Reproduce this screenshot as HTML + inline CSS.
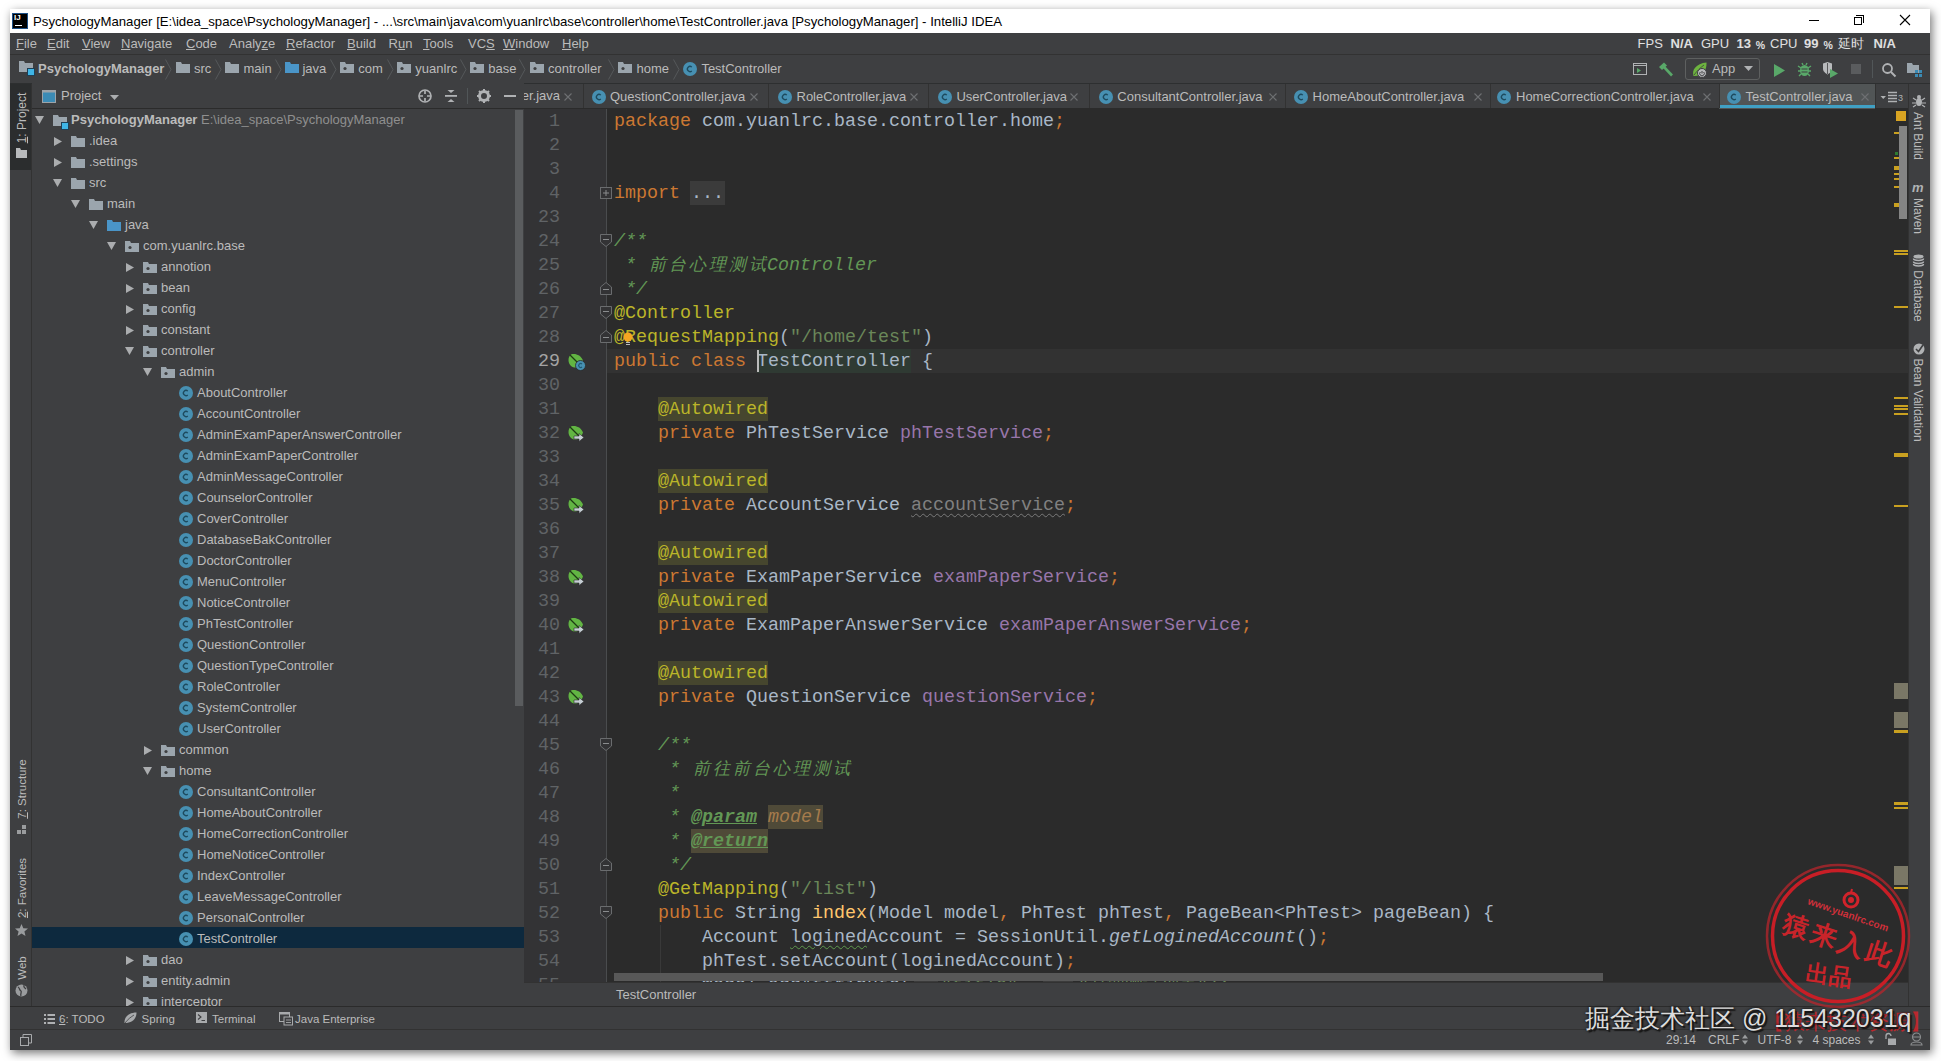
<!DOCTYPE html><html><head><meta charset="utf-8"><style>
*{box-sizing:border-box;margin:0;padding:0}
body{width:1941px;height:1061px;overflow:hidden;background:#fff;position:relative;font-family:"Liberation Sans",sans-serif;font-size:13px;color:#BBBBBB}
.a{position:absolute;white-space:pre}
svg.a{overflow:visible}
.mono{font-family:"Liberation Mono",monospace}
.t{position:absolute;white-space:pre;line-height:16px;color:#BBBBBB}
</style></head><body>
<div class="a" style="left:10px;top:9px;width:1920px;height:1041px;background:#3E3F41;box-shadow:2px 3px 9px rgba(0,0,0,0.55)"></div>
<div class="a" style="left:10px;top:9px;width:1920px;height:24px;background:#fff"></div>
<div class="a" style="left:12px;top:13px;width:16px;height:16px;background:#000;border:1px solid #1d4f86"></div>
<div class="a" style="left:14px;top:13px;font:bold 8px 'Liberation Sans';color:#fff">IJ</div>
<div class="a" style="left:15px;top:25px;width:7px;height:1px;background:#fff"></div>
<div class="a" style="left:33px;top:14px;font-size:13.2px;color:#000;line-height:16px">PsychologyManager [E:\idea_space\PsychologyManager] - ...\src\main\java\com\yuanlrc\base\controller\home\TestController.java [PsychologyManager] - IntelliJ IDEA</div>
<div class="a" style="left:1809px;top:20px;width:10px;height:1px;background:#000"></div>
<div class="a" style="left:1854px;top:17px;width:8px;height:8px;border:1px solid #000;background:#fff"></div>
<div class="a" style="left:1856px;top:15px;width:8px;height:8px;border-top:1px solid #000;border-right:1px solid #000"></div>
<svg class="a" style="left:1899px;top:14px" width="12" height="12" viewBox="0 0 12 12"><path d="M1 1L11 11M11 1L1 11" stroke="#000" stroke-width="1.1"/></svg>
<div class="a" style="left:10px;top:33px;width:1920px;height:22px;background:#3E3F41;border-bottom:1px solid #323232"></div>
<div class="t" style="left:16px;top:36px"><u>F</u>ile</div>
<div class="t" style="left:47px;top:36px"><u>E</u>dit</div>
<div class="t" style="left:82px;top:36px"><u>V</u>iew</div>
<div class="t" style="left:121px;top:36px"><u>N</u>avigate</div>
<div class="t" style="left:186px;top:36px"><u>C</u>ode</div>
<div class="t" style="left:229px;top:36px">Analy<u>z</u>e</div>
<div class="t" style="left:286px;top:36px"><u>R</u>efactor</div>
<div class="t" style="left:347px;top:36px"><u>B</u>uild</div>
<div class="t" style="left:388.5px;top:36px">R<u>u</u>n</div>
<div class="t" style="left:423px;top:36px"><u>T</u>ools</div>
<div class="t" style="left:468px;top:36px">VC<u>S</u></div>
<div class="t" style="left:503px;top:36px"><u>W</u>indow</div>
<div class="t" style="left:562px;top:36px"><u>H</u>elp</div>
<div class="t" style="left:1637.6px;top:36px;color:#E0E0E0;">FPS</div>
<div class="t" style="left:1670.6px;top:36px;color:#E0E0E0;font-weight:bold;">N/A</div>
<div class="t" style="left:1701px;top:36px;color:#E0E0E0;">GPU</div>
<div class="t" style="left:1736.6px;top:36px;color:#E0E0E0;font-weight:bold;">13</div>
<div class="t" style="left:1755.7px;top:36px;color:#E0E0E0;font-weight:bold;font-size:10.5px;top:37px;">%</div>
<div class="t" style="left:1770px;top:36px;color:#E0E0E0;">CPU</div>
<div class="t" style="left:1804px;top:36px;color:#E0E0E0;font-weight:bold;">99</div>
<div class="t" style="left:1823.6px;top:36px;color:#E0E0E0;font-weight:bold;font-size:10.5px;top:37px;">%</div>
<div class="t" style="left:1837.6px;top:36px;color:#E0E0E0;">延时</div>
<div class="t" style="left:1873.5px;top:36px;color:#E0E0E0;font-weight:bold;">N/A</div>
<div class="a" style="left:10px;top:55px;width:1920px;height:29px;background:#3E3F41;border-bottom:1px solid #2D2F30"></div>
<svg class="a" style="left:19px;top:61px" width="16" height="15" viewBox="0 0 16 15"><path d="M0 0H5L6 2H14V11H0Z" fill="#9BA5AD"/><rect x="8.5" y="7.5" width="7" height="7" fill="#3FB5E6" stroke="#1f3f55" stroke-width="1"/></svg>
<div class="t" style="left:38px;top:61px;font-weight:bold">PsychologyManager</div>
<svg class="a" style="left:165px;top:59px" width="7" height="21" viewBox="0 0 7 21"><path d="M0.5 0.5L6 10.5L0.5 20.5" stroke="#55585A" fill="none" stroke-width="1"/></svg>
<svg class="a" style="left:175.8px;top:62px" width="14" height="11" viewBox="0 0 14 11"><path d="M0 0H5L6 2H14V11H0Z" fill="#9BA5AD"/></svg>
<div class="t" style="left:194px;top:61px">src</div>
<svg class="a" style="left:215px;top:59px" width="7" height="21" viewBox="0 0 7 21"><path d="M0.5 0.5L6 10.5L0.5 20.5" stroke="#55585A" fill="none" stroke-width="1"/></svg>
<svg class="a" style="left:225px;top:62px" width="14" height="11" viewBox="0 0 14 11"><path d="M0 0H5L6 2H14V11H0Z" fill="#9BA5AD"/></svg>
<div class="t" style="left:243.5px;top:61px">main</div>
<svg class="a" style="left:275px;top:59px" width="7" height="21" viewBox="0 0 7 21"><path d="M0.5 0.5L6 10.5L0.5 20.5" stroke="#55585A" fill="none" stroke-width="1"/></svg>
<svg class="a" style="left:284.7px;top:62px" width="14" height="11" viewBox="0 0 14 11"><path d="M0 0H5L6 2H14V11H0Z" fill="#4A95C8"/></svg>
<div class="t" style="left:302.4px;top:61px">java</div>
<svg class="a" style="left:329.5px;top:59px" width="7" height="21" viewBox="0 0 7 21"><path d="M0.5 0.5L6 10.5L0.5 20.5" stroke="#55585A" fill="none" stroke-width="1"/></svg>
<svg class="a" style="left:340px;top:62px" width="14" height="11" viewBox="0 0 14 11"><path d="M0 0H5L6 2H14V11H0Z" fill="#9BA5AD"/><circle cx="5" cy="6.5" r="1.6" fill="#3E3F41"/></svg>
<div class="t" style="left:358.3px;top:61px">com</div>
<svg class="a" style="left:387px;top:59px" width="7" height="21" viewBox="0 0 7 21"><path d="M0.5 0.5L6 10.5L0.5 20.5" stroke="#55585A" fill="none" stroke-width="1"/></svg>
<svg class="a" style="left:397px;top:62px" width="14" height="11" viewBox="0 0 14 11"><path d="M0 0H5L6 2H14V11H0Z" fill="#9BA5AD"/><circle cx="5" cy="6.5" r="1.6" fill="#3E3F41"/></svg>
<div class="t" style="left:415.3px;top:61px">yuanlrc</div>
<svg class="a" style="left:460px;top:59px" width="7" height="21" viewBox="0 0 7 21"><path d="M0.5 0.5L6 10.5L0.5 20.5" stroke="#55585A" fill="none" stroke-width="1"/></svg>
<svg class="a" style="left:470px;top:62px" width="14" height="11" viewBox="0 0 14 11"><path d="M0 0H5L6 2H14V11H0Z" fill="#9BA5AD"/><circle cx="5" cy="6.5" r="1.6" fill="#3E3F41"/></svg>
<div class="t" style="left:488.3px;top:61px">base</div>
<svg class="a" style="left:519.4px;top:59px" width="7" height="21" viewBox="0 0 7 21"><path d="M0.5 0.5L6 10.5L0.5 20.5" stroke="#55585A" fill="none" stroke-width="1"/></svg>
<svg class="a" style="left:530px;top:62px" width="14" height="11" viewBox="0 0 14 11"><path d="M0 0H5L6 2H14V11H0Z" fill="#9BA5AD"/><circle cx="5" cy="6.5" r="1.6" fill="#3E3F41"/></svg>
<div class="t" style="left:548px;top:61px">controller</div>
<svg class="a" style="left:608px;top:59px" width="7" height="21" viewBox="0 0 7 21"><path d="M0.5 0.5L6 10.5L0.5 20.5" stroke="#55585A" fill="none" stroke-width="1"/></svg>
<svg class="a" style="left:618px;top:62px" width="14" height="11" viewBox="0 0 14 11"><path d="M0 0H5L6 2H14V11H0Z" fill="#9BA5AD"/><circle cx="5" cy="6.5" r="1.6" fill="#3E3F41"/></svg>
<div class="t" style="left:636.5px;top:61px">home</div>
<svg class="a" style="left:673px;top:59px" width="7" height="21" viewBox="0 0 7 21"><path d="M0.5 0.5L6 10.5L0.5 20.5" stroke="#55585A" fill="none" stroke-width="1"/></svg>
<svg class="a" style="left:683px;top:62px" width="14" height="14" viewBox="0 0 14 14"><circle cx="7" cy="7" r="7" fill="#4790B2"/><path d="M8.8 5.1A2.6 2.6 0 1 0 8.8 8.9" stroke="#1D4A5E" stroke-width="1.3" fill="none"/></svg>
<div class="t" style="left:701.4px;top:61px">TestController</div>
<div class="a" style="left:10px;top:84px;width:22px;height:922px;background:#3E3F41;border-right:1px solid #323232"></div>
<div class="a" style="left:10px;top:84px;width:21px;height:86px;background:#2B2D2E"></div>
<div class="a" style="left:32px;top:83px;width:492px;height:26px;background:#3E3F41;border-bottom:1px solid #2D2F30"></div>
<div class="a" style="left:32px;top:109px;width:492px;height:897px;background:#3E3F41"></div>
<div class="a" style="left:32px;top:109px;width:492px;height:897px;overflow:hidden">
<svg class="a" style="left:3px;top:7px" width="9" height="8" viewBox="0 0 9 8"><path d="M0 0H9L4.5 8Z" fill="#ABADAF"/></svg>
<svg class="a" style="left:21px;top:6px" width="16" height="15" viewBox="0 0 16 15"><path d="M0 0H5L6 2H14V11H0Z" fill="#9BA5AD"/><rect x="8.5" y="7.5" width="7" height="7" fill="#3FB5E6" stroke="#1f3f55" stroke-width="1"/></svg>
<div class="t" style="left:39px;top:3px;font-weight:bold">PsychologyManager</div>
<div class="t" style="left:169px;top:3px;color:#8F8F8F">E:\idea_space\PsychologyManager</div>
<svg class="a" style="left:22px;top:27.5px" width="8" height="9" viewBox="0 0 8 9"><path d="M0 0V9L8 4.5Z" fill="#ABADAF"/></svg>
<svg class="a" style="left:39px;top:26.5px" width="14" height="11" viewBox="0 0 14 11"><path d="M0 0H5L6 2H14V11H0Z" fill="#9BA5AD"/></svg>
<div class="t" style="left:57px;top:24px">.idea</div>
<svg class="a" style="left:22px;top:48.5px" width="8" height="9" viewBox="0 0 8 9"><path d="M0 0V9L8 4.5Z" fill="#ABADAF"/></svg>
<svg class="a" style="left:39px;top:47.5px" width="14" height="11" viewBox="0 0 14 11"><path d="M0 0H5L6 2H14V11H0Z" fill="#9BA5AD"/></svg>
<div class="t" style="left:57px;top:45px">.settings</div>
<svg class="a" style="left:21px;top:70px" width="9" height="8" viewBox="0 0 9 8"><path d="M0 0H9L4.5 8Z" fill="#ABADAF"/></svg>
<svg class="a" style="left:39px;top:68.5px" width="14" height="11" viewBox="0 0 14 11"><path d="M0 0H5L6 2H14V11H0Z" fill="#9BA5AD"/></svg>
<div class="t" style="left:57px;top:66px">src</div>
<svg class="a" style="left:39px;top:91px" width="9" height="8" viewBox="0 0 9 8"><path d="M0 0H9L4.5 8Z" fill="#ABADAF"/></svg>
<svg class="a" style="left:57px;top:89.5px" width="14" height="11" viewBox="0 0 14 11"><path d="M0 0H5L6 2H14V11H0Z" fill="#9BA5AD"/></svg>
<div class="t" style="left:75px;top:87px">main</div>
<svg class="a" style="left:57px;top:112px" width="9" height="8" viewBox="0 0 9 8"><path d="M0 0H9L4.5 8Z" fill="#ABADAF"/></svg>
<svg class="a" style="left:75px;top:110.5px" width="14" height="11" viewBox="0 0 14 11"><path d="M0 0H5L6 2H14V11H0Z" fill="#4A95C8"/></svg>
<div class="t" style="left:93px;top:108px">java</div>
<svg class="a" style="left:75px;top:133px" width="9" height="8" viewBox="0 0 9 8"><path d="M0 0H9L4.5 8Z" fill="#ABADAF"/></svg>
<svg class="a" style="left:93px;top:131.5px" width="14" height="11" viewBox="0 0 14 11"><path d="M0 0H5L6 2H14V11H0Z" fill="#9BA5AD"/><circle cx="5" cy="6.5" r="1.6" fill="#3E3F41"/></svg>
<div class="t" style="left:111px;top:129px">com.yuanlrc.base</div>
<svg class="a" style="left:94px;top:153.5px" width="8" height="9" viewBox="0 0 8 9"><path d="M0 0V9L8 4.5Z" fill="#ABADAF"/></svg>
<svg class="a" style="left:111px;top:152.5px" width="14" height="11" viewBox="0 0 14 11"><path d="M0 0H5L6 2H14V11H0Z" fill="#9BA5AD"/><circle cx="5" cy="6.5" r="1.6" fill="#3E3F41"/></svg>
<div class="t" style="left:129px;top:150px">annotion</div>
<svg class="a" style="left:94px;top:174.5px" width="8" height="9" viewBox="0 0 8 9"><path d="M0 0V9L8 4.5Z" fill="#ABADAF"/></svg>
<svg class="a" style="left:111px;top:173.5px" width="14" height="11" viewBox="0 0 14 11"><path d="M0 0H5L6 2H14V11H0Z" fill="#9BA5AD"/><circle cx="5" cy="6.5" r="1.6" fill="#3E3F41"/></svg>
<div class="t" style="left:129px;top:171px">bean</div>
<svg class="a" style="left:94px;top:195.5px" width="8" height="9" viewBox="0 0 8 9"><path d="M0 0V9L8 4.5Z" fill="#ABADAF"/></svg>
<svg class="a" style="left:111px;top:194.5px" width="14" height="11" viewBox="0 0 14 11"><path d="M0 0H5L6 2H14V11H0Z" fill="#9BA5AD"/><circle cx="5" cy="6.5" r="1.6" fill="#3E3F41"/></svg>
<div class="t" style="left:129px;top:192px">config</div>
<svg class="a" style="left:94px;top:216.5px" width="8" height="9" viewBox="0 0 8 9"><path d="M0 0V9L8 4.5Z" fill="#ABADAF"/></svg>
<svg class="a" style="left:111px;top:215.5px" width="14" height="11" viewBox="0 0 14 11"><path d="M0 0H5L6 2H14V11H0Z" fill="#9BA5AD"/><circle cx="5" cy="6.5" r="1.6" fill="#3E3F41"/></svg>
<div class="t" style="left:129px;top:213px">constant</div>
<svg class="a" style="left:93px;top:238px" width="9" height="8" viewBox="0 0 9 8"><path d="M0 0H9L4.5 8Z" fill="#ABADAF"/></svg>
<svg class="a" style="left:111px;top:236.5px" width="14" height="11" viewBox="0 0 14 11"><path d="M0 0H5L6 2H14V11H0Z" fill="#9BA5AD"/><circle cx="5" cy="6.5" r="1.6" fill="#3E3F41"/></svg>
<div class="t" style="left:129px;top:234px">controller</div>
<svg class="a" style="left:111px;top:259px" width="9" height="8" viewBox="0 0 9 8"><path d="M0 0H9L4.5 8Z" fill="#ABADAF"/></svg>
<svg class="a" style="left:129px;top:257.5px" width="14" height="11" viewBox="0 0 14 11"><path d="M0 0H5L6 2H14V11H0Z" fill="#9BA5AD"/><circle cx="5" cy="6.5" r="1.6" fill="#3E3F41"/></svg>
<div class="t" style="left:147px;top:255px">admin</div>
<svg class="a" style="left:147px;top:277px" width="14" height="14" viewBox="0 0 14 14"><circle cx="7" cy="7" r="7" fill="#4790B2"/><path d="M8.8 5.1A2.6 2.6 0 1 0 8.8 8.9" stroke="#1D4A5E" stroke-width="1.3" fill="none"/></svg>
<div class="t" style="left:165px;top:276px">AboutController</div>
<svg class="a" style="left:147px;top:298px" width="14" height="14" viewBox="0 0 14 14"><circle cx="7" cy="7" r="7" fill="#4790B2"/><path d="M8.8 5.1A2.6 2.6 0 1 0 8.8 8.9" stroke="#1D4A5E" stroke-width="1.3" fill="none"/></svg>
<div class="t" style="left:165px;top:297px">AccountController</div>
<svg class="a" style="left:147px;top:319px" width="14" height="14" viewBox="0 0 14 14"><circle cx="7" cy="7" r="7" fill="#4790B2"/><path d="M8.8 5.1A2.6 2.6 0 1 0 8.8 8.9" stroke="#1D4A5E" stroke-width="1.3" fill="none"/></svg>
<div class="t" style="left:165px;top:318px">AdminExamPaperAnswerController</div>
<svg class="a" style="left:147px;top:340px" width="14" height="14" viewBox="0 0 14 14"><circle cx="7" cy="7" r="7" fill="#4790B2"/><path d="M8.8 5.1A2.6 2.6 0 1 0 8.8 8.9" stroke="#1D4A5E" stroke-width="1.3" fill="none"/></svg>
<div class="t" style="left:165px;top:339px">AdminExamPaperController</div>
<svg class="a" style="left:147px;top:361px" width="14" height="14" viewBox="0 0 14 14"><circle cx="7" cy="7" r="7" fill="#4790B2"/><path d="M8.8 5.1A2.6 2.6 0 1 0 8.8 8.9" stroke="#1D4A5E" stroke-width="1.3" fill="none"/></svg>
<div class="t" style="left:165px;top:360px">AdminMessageController</div>
<svg class="a" style="left:147px;top:382px" width="14" height="14" viewBox="0 0 14 14"><circle cx="7" cy="7" r="7" fill="#4790B2"/><path d="M8.8 5.1A2.6 2.6 0 1 0 8.8 8.9" stroke="#1D4A5E" stroke-width="1.3" fill="none"/></svg>
<div class="t" style="left:165px;top:381px">CounselorController</div>
<svg class="a" style="left:147px;top:403px" width="14" height="14" viewBox="0 0 14 14"><circle cx="7" cy="7" r="7" fill="#4790B2"/><path d="M8.8 5.1A2.6 2.6 0 1 0 8.8 8.9" stroke="#1D4A5E" stroke-width="1.3" fill="none"/></svg>
<div class="t" style="left:165px;top:402px">CoverController</div>
<svg class="a" style="left:147px;top:424px" width="14" height="14" viewBox="0 0 14 14"><circle cx="7" cy="7" r="7" fill="#4790B2"/><path d="M8.8 5.1A2.6 2.6 0 1 0 8.8 8.9" stroke="#1D4A5E" stroke-width="1.3" fill="none"/></svg>
<div class="t" style="left:165px;top:423px">DatabaseBakController</div>
<svg class="a" style="left:147px;top:445px" width="14" height="14" viewBox="0 0 14 14"><circle cx="7" cy="7" r="7" fill="#4790B2"/><path d="M8.8 5.1A2.6 2.6 0 1 0 8.8 8.9" stroke="#1D4A5E" stroke-width="1.3" fill="none"/></svg>
<div class="t" style="left:165px;top:444px">DoctorController</div>
<svg class="a" style="left:147px;top:466px" width="14" height="14" viewBox="0 0 14 14"><circle cx="7" cy="7" r="7" fill="#4790B2"/><path d="M8.8 5.1A2.6 2.6 0 1 0 8.8 8.9" stroke="#1D4A5E" stroke-width="1.3" fill="none"/></svg>
<div class="t" style="left:165px;top:465px">MenuController</div>
<svg class="a" style="left:147px;top:487px" width="14" height="14" viewBox="0 0 14 14"><circle cx="7" cy="7" r="7" fill="#4790B2"/><path d="M8.8 5.1A2.6 2.6 0 1 0 8.8 8.9" stroke="#1D4A5E" stroke-width="1.3" fill="none"/></svg>
<div class="t" style="left:165px;top:486px">NoticeController</div>
<svg class="a" style="left:147px;top:508px" width="14" height="14" viewBox="0 0 14 14"><circle cx="7" cy="7" r="7" fill="#4790B2"/><path d="M8.8 5.1A2.6 2.6 0 1 0 8.8 8.9" stroke="#1D4A5E" stroke-width="1.3" fill="none"/></svg>
<div class="t" style="left:165px;top:507px">PhTestController</div>
<svg class="a" style="left:147px;top:529px" width="14" height="14" viewBox="0 0 14 14"><circle cx="7" cy="7" r="7" fill="#4790B2"/><path d="M8.8 5.1A2.6 2.6 0 1 0 8.8 8.9" stroke="#1D4A5E" stroke-width="1.3" fill="none"/></svg>
<div class="t" style="left:165px;top:528px">QuestionController</div>
<svg class="a" style="left:147px;top:550px" width="14" height="14" viewBox="0 0 14 14"><circle cx="7" cy="7" r="7" fill="#4790B2"/><path d="M8.8 5.1A2.6 2.6 0 1 0 8.8 8.9" stroke="#1D4A5E" stroke-width="1.3" fill="none"/></svg>
<div class="t" style="left:165px;top:549px">QuestionTypeController</div>
<svg class="a" style="left:147px;top:571px" width="14" height="14" viewBox="0 0 14 14"><circle cx="7" cy="7" r="7" fill="#4790B2"/><path d="M8.8 5.1A2.6 2.6 0 1 0 8.8 8.9" stroke="#1D4A5E" stroke-width="1.3" fill="none"/></svg>
<div class="t" style="left:165px;top:570px">RoleController</div>
<svg class="a" style="left:147px;top:592px" width="14" height="14" viewBox="0 0 14 14"><circle cx="7" cy="7" r="7" fill="#4790B2"/><path d="M8.8 5.1A2.6 2.6 0 1 0 8.8 8.9" stroke="#1D4A5E" stroke-width="1.3" fill="none"/></svg>
<div class="t" style="left:165px;top:591px">SystemController</div>
<svg class="a" style="left:147px;top:613px" width="14" height="14" viewBox="0 0 14 14"><circle cx="7" cy="7" r="7" fill="#4790B2"/><path d="M8.8 5.1A2.6 2.6 0 1 0 8.8 8.9" stroke="#1D4A5E" stroke-width="1.3" fill="none"/></svg>
<div class="t" style="left:165px;top:612px">UserController</div>
<svg class="a" style="left:112px;top:636.5px" width="8" height="9" viewBox="0 0 8 9"><path d="M0 0V9L8 4.5Z" fill="#ABADAF"/></svg>
<svg class="a" style="left:129px;top:635.5px" width="14" height="11" viewBox="0 0 14 11"><path d="M0 0H5L6 2H14V11H0Z" fill="#9BA5AD"/><circle cx="5" cy="6.5" r="1.6" fill="#3E3F41"/></svg>
<div class="t" style="left:147px;top:633px">common</div>
<svg class="a" style="left:111px;top:658px" width="9" height="8" viewBox="0 0 9 8"><path d="M0 0H9L4.5 8Z" fill="#ABADAF"/></svg>
<svg class="a" style="left:129px;top:656.5px" width="14" height="11" viewBox="0 0 14 11"><path d="M0 0H5L6 2H14V11H0Z" fill="#9BA5AD"/><circle cx="5" cy="6.5" r="1.6" fill="#3E3F41"/></svg>
<div class="t" style="left:147px;top:654px">home</div>
<svg class="a" style="left:147px;top:676px" width="14" height="14" viewBox="0 0 14 14"><circle cx="7" cy="7" r="7" fill="#4790B2"/><path d="M8.8 5.1A2.6 2.6 0 1 0 8.8 8.9" stroke="#1D4A5E" stroke-width="1.3" fill="none"/></svg>
<div class="t" style="left:165px;top:675px">ConsultantController</div>
<svg class="a" style="left:147px;top:697px" width="14" height="14" viewBox="0 0 14 14"><circle cx="7" cy="7" r="7" fill="#4790B2"/><path d="M8.8 5.1A2.6 2.6 0 1 0 8.8 8.9" stroke="#1D4A5E" stroke-width="1.3" fill="none"/></svg>
<div class="t" style="left:165px;top:696px">HomeAboutController</div>
<svg class="a" style="left:147px;top:718px" width="14" height="14" viewBox="0 0 14 14"><circle cx="7" cy="7" r="7" fill="#4790B2"/><path d="M8.8 5.1A2.6 2.6 0 1 0 8.8 8.9" stroke="#1D4A5E" stroke-width="1.3" fill="none"/></svg>
<div class="t" style="left:165px;top:717px">HomeCorrectionController</div>
<svg class="a" style="left:147px;top:739px" width="14" height="14" viewBox="0 0 14 14"><circle cx="7" cy="7" r="7" fill="#4790B2"/><path d="M8.8 5.1A2.6 2.6 0 1 0 8.8 8.9" stroke="#1D4A5E" stroke-width="1.3" fill="none"/></svg>
<div class="t" style="left:165px;top:738px">HomeNoticeController</div>
<svg class="a" style="left:147px;top:760px" width="14" height="14" viewBox="0 0 14 14"><circle cx="7" cy="7" r="7" fill="#4790B2"/><path d="M8.8 5.1A2.6 2.6 0 1 0 8.8 8.9" stroke="#1D4A5E" stroke-width="1.3" fill="none"/></svg>
<div class="t" style="left:165px;top:759px">IndexController</div>
<svg class="a" style="left:147px;top:781px" width="14" height="14" viewBox="0 0 14 14"><circle cx="7" cy="7" r="7" fill="#4790B2"/><path d="M8.8 5.1A2.6 2.6 0 1 0 8.8 8.9" stroke="#1D4A5E" stroke-width="1.3" fill="none"/></svg>
<div class="t" style="left:165px;top:780px">LeaveMessageController</div>
<svg class="a" style="left:147px;top:802px" width="14" height="14" viewBox="0 0 14 14"><circle cx="7" cy="7" r="7" fill="#4790B2"/><path d="M8.8 5.1A2.6 2.6 0 1 0 8.8 8.9" stroke="#1D4A5E" stroke-width="1.3" fill="none"/></svg>
<div class="t" style="left:165px;top:801px">PersonalController</div>
<div class="a" style="left:0px;top:817.5px;width:492px;height:21px;background:#0D293E"></div>
<svg class="a" style="left:147px;top:823px" width="14" height="14" viewBox="0 0 14 14"><circle cx="7" cy="7" r="7" fill="#4790B2"/><path d="M8.8 5.1A2.6 2.6 0 1 0 8.8 8.9" stroke="#1D4A5E" stroke-width="1.3" fill="none"/></svg>
<div class="t" style="left:165px;top:822px">TestController</div>
<svg class="a" style="left:94px;top:846.5px" width="8" height="9" viewBox="0 0 8 9"><path d="M0 0V9L8 4.5Z" fill="#ABADAF"/></svg>
<svg class="a" style="left:111px;top:845.5px" width="14" height="11" viewBox="0 0 14 11"><path d="M0 0H5L6 2H14V11H0Z" fill="#9BA5AD"/><circle cx="5" cy="6.5" r="1.6" fill="#3E3F41"/></svg>
<div class="t" style="left:129px;top:843px">dao</div>
<svg class="a" style="left:94px;top:867.5px" width="8" height="9" viewBox="0 0 8 9"><path d="M0 0V9L8 4.5Z" fill="#ABADAF"/></svg>
<svg class="a" style="left:111px;top:866.5px" width="14" height="11" viewBox="0 0 14 11"><path d="M0 0H5L6 2H14V11H0Z" fill="#9BA5AD"/><circle cx="5" cy="6.5" r="1.6" fill="#3E3F41"/></svg>
<div class="t" style="left:129px;top:864px">entity.admin</div>
<svg class="a" style="left:94px;top:888.5px" width="8" height="9" viewBox="0 0 8 9"><path d="M0 0V9L8 4.5Z" fill="#ABADAF"/></svg>
<svg class="a" style="left:111px;top:887.5px" width="14" height="11" viewBox="0 0 14 11"><path d="M0 0H5L6 2H14V11H0Z" fill="#9BA5AD"/><circle cx="5" cy="6.5" r="1.6" fill="#3E3F41"/></svg>
<div class="t" style="left:129px;top:885px">interceptor</div>
</div>
<div class="a" style="left:515px;top:110px;width:8px;height:596px;background:#5A5C5E;border-radius:0"></div>
<div class="a" style="left:524px;top:109px;width:83px;height:873px;background:#333335"></div>
<div class="a" style="left:607px;top:109px;width:1301px;height:873px;background:#2B2B2B"></div>
<div class="a" style="left:607px;top:109px;width:1301px;height:873px;overflow:hidden">
<div class="a" style="left:0;top:240px;width:1301px;height:24px;background:#323232"></div>
<div class="a mono" style="left:7.00px;top:1px;line-height:24px;font-size:18.33px;color:#CC7832;">package </div>
<div class="a mono" style="left:95.00px;top:1px;line-height:24px;font-size:18.33px;color:#A9B7C6;">com.yuanlrc.base.controller.home</div>
<div class="a mono" style="left:447.00px;top:1px;line-height:24px;font-size:18.33px;color:#CC7832;">;</div>
<div class="a mono" style="left:7.00px;top:73px;line-height:24px;font-size:18.33px;color:#CC7832;">import </div>
<div class="a" style="left:83.0px;top:72px;width:35.0px;height:24px;background:#3B3B3B"></div>
<div class="a mono" style="left:84.00px;top:73px;line-height:24px;font-size:18.33px;color:#A9B7C6;">...</div>
<div class="a mono" style="left:7.00px;top:121px;line-height:24px;font-size:18.33px;color:#629755;font-style:italic;">/**</div>
<div class="a mono" style="left:7.00px;top:145px;line-height:24px;font-size:18.33px;color:#629755;font-style:italic;"> * </div>
<div class="a mono" style="left:40.00px;top:145px;width:20.0px;line-height:24px;font-size:17px;color:#629755;font-style:italic;text-align:center">前</div>
<div class="a mono" style="left:60.00px;top:145px;width:20.0px;line-height:24px;font-size:17px;color:#629755;font-style:italic;text-align:center">台</div>
<div class="a mono" style="left:80.00px;top:145px;width:20.0px;line-height:24px;font-size:17px;color:#629755;font-style:italic;text-align:center">心</div>
<div class="a mono" style="left:100.00px;top:145px;width:20.0px;line-height:24px;font-size:17px;color:#629755;font-style:italic;text-align:center">理</div>
<div class="a mono" style="left:120.00px;top:145px;width:20.0px;line-height:24px;font-size:17px;color:#629755;font-style:italic;text-align:center">测</div>
<div class="a mono" style="left:140.00px;top:145px;width:20.0px;line-height:24px;font-size:17px;color:#629755;font-style:italic;text-align:center">试</div>
<div class="a mono" style="left:160.00px;top:145px;line-height:24px;font-size:18.33px;color:#629755;font-style:italic;">Controller</div>
<div class="a mono" style="left:7.00px;top:169px;line-height:24px;font-size:18.33px;color:#629755;font-style:italic;"> */</div>
<div class="a mono" style="left:7.00px;top:193px;line-height:24px;font-size:18.33px;color:#BBB529;">@Controller</div>
<div class="a mono" style="left:7.00px;top:217px;line-height:24px;font-size:18.33px;color:#BBB529;">@RequestMapping</div>
<div class="a mono" style="left:172.00px;top:217px;line-height:24px;font-size:18.33px;color:#A9B7C6;">(</div>
<div class="a mono" style="left:183.00px;top:217px;line-height:24px;font-size:18.33px;color:#6A8759;">&quot;/home/test&quot;</div>
<div class="a mono" style="left:315.00px;top:217px;line-height:24px;font-size:18.33px;color:#A9B7C6;">)</div>
<div class="a mono" style="left:7.00px;top:241px;line-height:24px;font-size:18.33px;color:#CC7832;">public </div>
<div class="a mono" style="left:84.00px;top:241px;line-height:24px;font-size:18.33px;color:#CC7832;">class </div>
<div class="a" style="left:150.0px;top:240px;width:154.0px;height:24px;background:#2F3A33"></div>
<div class="a mono" style="left:150.00px;top:241px;line-height:24px;font-size:18.33px;color:#A9B7C6;">TestController</div>
<div class="a mono" style="left:304.00px;top:241px;line-height:24px;font-size:18.33px;color:#A9B7C6;"> {</div>
<div class="a mono" style="left:7.00px;top:289px;line-height:24px;font-size:18.33px;color:#A9B7C6;">    </div>
<div class="a" style="left:51.0px;top:288px;width:110.0px;height:24px;background:#46462E"></div>
<div class="a mono" style="left:51.00px;top:289px;line-height:24px;font-size:18.33px;color:#BBB529;">@Autowired</div>
<div class="a mono" style="left:7.00px;top:313px;line-height:24px;font-size:18.33px;color:#CC7832;">    private </div>
<div class="a mono" style="left:139.00px;top:313px;line-height:24px;font-size:18.33px;color:#A9B7C6;">PhTestService </div>
<div class="a mono" style="left:293.00px;top:313px;line-height:24px;font-size:18.33px;color:#9876AA;">phTestService</div>
<div class="a mono" style="left:436.00px;top:313px;line-height:24px;font-size:18.33px;color:#CC7832;">;</div>
<div class="a mono" style="left:7.00px;top:361px;line-height:24px;font-size:18.33px;color:#A9B7C6;">    </div>
<div class="a" style="left:51.0px;top:360px;width:110.0px;height:24px;background:#46462E"></div>
<div class="a mono" style="left:51.00px;top:361px;line-height:24px;font-size:18.33px;color:#BBB529;">@Autowired</div>
<div class="a mono" style="left:7.00px;top:385px;line-height:24px;font-size:18.33px;color:#CC7832;">    private </div>
<div class="a mono" style="left:139.00px;top:385px;line-height:24px;font-size:18.33px;color:#A9B7C6;">AccountService </div>
<div class="a mono" style="left:304.00px;top:385px;line-height:24px;font-size:18.33px;color:#808080;text-decoration:underline wavy #7A7A7A;text-decoration-thickness:1px;text-underline-offset:3px;">accountService</div>
<div class="a mono" style="left:458.00px;top:385px;line-height:24px;font-size:18.33px;color:#CC7832;">;</div>
<div class="a mono" style="left:7.00px;top:433px;line-height:24px;font-size:18.33px;color:#A9B7C6;">    </div>
<div class="a" style="left:51.0px;top:432px;width:110.0px;height:24px;background:#46462E"></div>
<div class="a mono" style="left:51.00px;top:433px;line-height:24px;font-size:18.33px;color:#BBB529;">@Autowired</div>
<div class="a mono" style="left:7.00px;top:457px;line-height:24px;font-size:18.33px;color:#CC7832;">    private </div>
<div class="a mono" style="left:139.00px;top:457px;line-height:24px;font-size:18.33px;color:#A9B7C6;">ExamPaperService </div>
<div class="a mono" style="left:326.00px;top:457px;line-height:24px;font-size:18.33px;color:#9876AA;">examPaperService</div>
<div class="a mono" style="left:502.00px;top:457px;line-height:24px;font-size:18.33px;color:#CC7832;">;</div>
<div class="a mono" style="left:7.00px;top:481px;line-height:24px;font-size:18.33px;color:#A9B7C6;">    </div>
<div class="a" style="left:51.0px;top:480px;width:110.0px;height:24px;background:#46462E"></div>
<div class="a mono" style="left:51.00px;top:481px;line-height:24px;font-size:18.33px;color:#BBB529;">@Autowired</div>
<div class="a mono" style="left:7.00px;top:505px;line-height:24px;font-size:18.33px;color:#CC7832;">    private </div>
<div class="a mono" style="left:139.00px;top:505px;line-height:24px;font-size:18.33px;color:#A9B7C6;">ExamPaperAnswerService </div>
<div class="a mono" style="left:392.00px;top:505px;line-height:24px;font-size:18.33px;color:#9876AA;">examPaperAnswerService</div>
<div class="a mono" style="left:634.00px;top:505px;line-height:24px;font-size:18.33px;color:#CC7832;">;</div>
<div class="a mono" style="left:7.00px;top:553px;line-height:24px;font-size:18.33px;color:#A9B7C6;">    </div>
<div class="a" style="left:51.0px;top:552px;width:110.0px;height:24px;background:#46462E"></div>
<div class="a mono" style="left:51.00px;top:553px;line-height:24px;font-size:18.33px;color:#BBB529;">@Autowired</div>
<div class="a mono" style="left:7.00px;top:577px;line-height:24px;font-size:18.33px;color:#CC7832;">    private </div>
<div class="a mono" style="left:139.00px;top:577px;line-height:24px;font-size:18.33px;color:#A9B7C6;">QuestionService </div>
<div class="a mono" style="left:315.00px;top:577px;line-height:24px;font-size:18.33px;color:#9876AA;">questionService</div>
<div class="a mono" style="left:480.00px;top:577px;line-height:24px;font-size:18.33px;color:#CC7832;">;</div>
<div class="a mono" style="left:7.00px;top:625px;line-height:24px;font-size:18.33px;color:#629755;font-style:italic;">    /**</div>
<div class="a mono" style="left:7.00px;top:649px;line-height:24px;font-size:18.33px;color:#629755;font-style:italic;">     * </div>
<div class="a mono" style="left:84.00px;top:649px;width:20.0px;line-height:24px;font-size:17px;color:#629755;font-style:italic;text-align:center">前</div>
<div class="a mono" style="left:104.00px;top:649px;width:20.0px;line-height:24px;font-size:17px;color:#629755;font-style:italic;text-align:center">往</div>
<div class="a mono" style="left:124.00px;top:649px;width:20.0px;line-height:24px;font-size:17px;color:#629755;font-style:italic;text-align:center">前</div>
<div class="a mono" style="left:144.00px;top:649px;width:20.0px;line-height:24px;font-size:17px;color:#629755;font-style:italic;text-align:center">台</div>
<div class="a mono" style="left:164.00px;top:649px;width:20.0px;line-height:24px;font-size:17px;color:#629755;font-style:italic;text-align:center">心</div>
<div class="a mono" style="left:184.00px;top:649px;width:20.0px;line-height:24px;font-size:17px;color:#629755;font-style:italic;text-align:center">理</div>
<div class="a mono" style="left:204.00px;top:649px;width:20.0px;line-height:24px;font-size:17px;color:#629755;font-style:italic;text-align:center">测</div>
<div class="a mono" style="left:224.00px;top:649px;width:20.0px;line-height:24px;font-size:17px;color:#629755;font-style:italic;text-align:center">试</div>
<div class="a mono" style="left:7.00px;top:673px;line-height:24px;font-size:18.33px;color:#629755;font-style:italic;">     *</div>
<div class="a mono" style="left:7.00px;top:697px;line-height:24px;font-size:18.33px;color:#629755;font-style:italic;">     * </div>
<div class="a mono" style="left:84.00px;top:697px;line-height:24px;font-size:18.33px;color:#629755;font-style:italic;font-weight:bold;text-decoration:underline;">@param</div>
<div class="a mono" style="left:150.00px;top:697px;line-height:24px;font-size:18.33px;color:#629755;"> </div>
<div class="a" style="left:161.0px;top:696px;width:55.0px;height:24px;background:#4F4A38"></div>
<div class="a mono" style="left:161.00px;top:697px;line-height:24px;font-size:18.33px;color:#A57B4C;font-style:italic;">model</div>
<div class="a mono" style="left:7.00px;top:721px;line-height:24px;font-size:18.33px;color:#629755;font-style:italic;">     * </div>
<div class="a" style="left:84.0px;top:720px;width:77.0px;height:24px;background:#4F4A38"></div>
<div class="a mono" style="left:84.00px;top:721px;line-height:24px;font-size:18.33px;color:#629755;font-style:italic;font-weight:bold;text-decoration:underline;">@return</div>
<div class="a mono" style="left:7.00px;top:745px;line-height:24px;font-size:18.33px;color:#629755;font-style:italic;">     */</div>
<div class="a mono" style="left:7.00px;top:769px;line-height:24px;font-size:18.33px;color:#A9B7C6;">    </div>
<div class="a mono" style="left:51.00px;top:769px;line-height:24px;font-size:18.33px;color:#BBB529;">@GetMapping</div>
<div class="a mono" style="left:172.00px;top:769px;line-height:24px;font-size:18.33px;color:#A9B7C6;">(</div>
<div class="a mono" style="left:183.00px;top:769px;line-height:24px;font-size:18.33px;color:#6A8759;">&quot;/list&quot;</div>
<div class="a mono" style="left:260.00px;top:769px;line-height:24px;font-size:18.33px;color:#A9B7C6;">)</div>
<div class="a mono" style="left:7.00px;top:793px;line-height:24px;font-size:18.33px;color:#CC7832;">    public </div>
<div class="a mono" style="left:128.00px;top:793px;line-height:24px;font-size:18.33px;color:#A9B7C6;">String </div>
<div class="a mono" style="left:205.00px;top:793px;line-height:24px;font-size:18.33px;color:#FFC66D;">index</div>
<div class="a mono" style="left:260.00px;top:793px;line-height:24px;font-size:18.33px;color:#A9B7C6;">(Model model</div>
<div class="a mono" style="left:392.00px;top:793px;line-height:24px;font-size:18.33px;color:#CC7832;">, </div>
<div class="a mono" style="left:414.00px;top:793px;line-height:24px;font-size:18.33px;color:#A9B7C6;">PhTest phTest</div>
<div class="a mono" style="left:557.00px;top:793px;line-height:24px;font-size:18.33px;color:#CC7832;">, </div>
<div class="a mono" style="left:579.00px;top:793px;line-height:24px;font-size:18.33px;color:#A9B7C6;">PageBean&lt;PhTest&gt; pageBean) {</div>
<div class="a mono" style="left:7.00px;top:817px;line-height:24px;font-size:18.33px;color:#A9B7C6;">        Account </div>
<div class="a mono" style="left:183.00px;top:817px;line-height:24px;font-size:18.33px;color:#A9B7C6;text-decoration:underline wavy #5E9A4E;text-decoration-thickness:1px;text-underline-offset:3px;">logined</div>
<div class="a mono" style="left:260.00px;top:817px;line-height:24px;font-size:18.33px;color:#A9B7C6;">Account = SessionUtil.</div>
<div class="a mono" style="left:502.00px;top:817px;line-height:24px;font-size:18.33px;color:#A9B7C6;font-style:italic;">getLoginedAccount</div>
<div class="a mono" style="left:689.00px;top:817px;line-height:24px;font-size:18.33px;color:#A9B7C6;">()</div>
<div class="a mono" style="left:711.00px;top:817px;line-height:24px;font-size:18.33px;color:#CC7832;">;</div>
<div class="a mono" style="left:7.00px;top:841px;line-height:24px;font-size:18.33px;color:#A9B7C6;">        phTest.setAccount(loginedAccount)</div>
<div class="a mono" style="left:458.00px;top:841px;line-height:24px;font-size:18.33px;color:#CC7832;">;</div>
<div class="a mono" style="left:7.00px;top:865px;line-height:24px;font-size:18.33px;color:#A9B7C6;">        model.addAttribute(</div>
</div>
<div class="a" style="left:757px;top:350px;width:2px;height:22px;background:#BBBBBB"></div>
<div class="a" style="left:524px;top:109px;width:83px;height:873px;overflow:hidden">
<div class="a mono" style="right:47px;top:1px;line-height:24px;font-size:18.33px;color:#606366;text-align:right">1</div>
<div class="a mono" style="right:47px;top:25px;line-height:24px;font-size:18.33px;color:#606366;text-align:right">2</div>
<div class="a mono" style="right:47px;top:49px;line-height:24px;font-size:18.33px;color:#606366;text-align:right">3</div>
<div class="a mono" style="right:47px;top:73px;line-height:24px;font-size:18.33px;color:#606366;text-align:right">4</div>
<div class="a mono" style="right:47px;top:97px;line-height:24px;font-size:18.33px;color:#606366;text-align:right">23</div>
<div class="a mono" style="right:47px;top:121px;line-height:24px;font-size:18.33px;color:#606366;text-align:right">24</div>
<div class="a mono" style="right:47px;top:145px;line-height:24px;font-size:18.33px;color:#606366;text-align:right">25</div>
<div class="a mono" style="right:47px;top:169px;line-height:24px;font-size:18.33px;color:#606366;text-align:right">26</div>
<div class="a mono" style="right:47px;top:193px;line-height:24px;font-size:18.33px;color:#606366;text-align:right">27</div>
<div class="a mono" style="right:47px;top:217px;line-height:24px;font-size:18.33px;color:#606366;text-align:right">28</div>
<div class="a mono" style="right:47px;top:241px;line-height:24px;font-size:18.33px;color:#A4A3A3;text-align:right">29</div>
<div class="a mono" style="right:47px;top:265px;line-height:24px;font-size:18.33px;color:#606366;text-align:right">30</div>
<div class="a mono" style="right:47px;top:289px;line-height:24px;font-size:18.33px;color:#606366;text-align:right">31</div>
<div class="a mono" style="right:47px;top:313px;line-height:24px;font-size:18.33px;color:#606366;text-align:right">32</div>
<div class="a mono" style="right:47px;top:337px;line-height:24px;font-size:18.33px;color:#606366;text-align:right">33</div>
<div class="a mono" style="right:47px;top:361px;line-height:24px;font-size:18.33px;color:#606366;text-align:right">34</div>
<div class="a mono" style="right:47px;top:385px;line-height:24px;font-size:18.33px;color:#606366;text-align:right">35</div>
<div class="a mono" style="right:47px;top:409px;line-height:24px;font-size:18.33px;color:#606366;text-align:right">36</div>
<div class="a mono" style="right:47px;top:433px;line-height:24px;font-size:18.33px;color:#606366;text-align:right">37</div>
<div class="a mono" style="right:47px;top:457px;line-height:24px;font-size:18.33px;color:#606366;text-align:right">38</div>
<div class="a mono" style="right:47px;top:481px;line-height:24px;font-size:18.33px;color:#606366;text-align:right">39</div>
<div class="a mono" style="right:47px;top:505px;line-height:24px;font-size:18.33px;color:#606366;text-align:right">40</div>
<div class="a mono" style="right:47px;top:529px;line-height:24px;font-size:18.33px;color:#606366;text-align:right">41</div>
<div class="a mono" style="right:47px;top:553px;line-height:24px;font-size:18.33px;color:#606366;text-align:right">42</div>
<div class="a mono" style="right:47px;top:577px;line-height:24px;font-size:18.33px;color:#606366;text-align:right">43</div>
<div class="a mono" style="right:47px;top:601px;line-height:24px;font-size:18.33px;color:#606366;text-align:right">44</div>
<div class="a mono" style="right:47px;top:625px;line-height:24px;font-size:18.33px;color:#606366;text-align:right">45</div>
<div class="a mono" style="right:47px;top:649px;line-height:24px;font-size:18.33px;color:#606366;text-align:right">46</div>
<div class="a mono" style="right:47px;top:673px;line-height:24px;font-size:18.33px;color:#606366;text-align:right">47</div>
<div class="a mono" style="right:47px;top:697px;line-height:24px;font-size:18.33px;color:#606366;text-align:right">48</div>
<div class="a mono" style="right:47px;top:721px;line-height:24px;font-size:18.33px;color:#606366;text-align:right">49</div>
<div class="a mono" style="right:47px;top:745px;line-height:24px;font-size:18.33px;color:#606366;text-align:right">50</div>
<div class="a mono" style="right:47px;top:769px;line-height:24px;font-size:18.33px;color:#606366;text-align:right">51</div>
<div class="a mono" style="right:47px;top:793px;line-height:24px;font-size:18.33px;color:#606366;text-align:right">52</div>
<div class="a mono" style="right:47px;top:817px;line-height:24px;font-size:18.33px;color:#606366;text-align:right">53</div>
<div class="a mono" style="right:47px;top:841px;line-height:24px;font-size:18.33px;color:#606366;text-align:right">54</div>
<div class="a mono" style="right:47px;top:865px;line-height:24px;font-size:18.33px;color:#606366;text-align:right">55</div>
</div>
<div class="a" style="left:606px;top:109px;width:1px;height:873px;background:#4A4C4E"></div>
<svg class="a" style="left:600px;top:187px" width="12" height="12" viewBox="0 0 12 12"><rect x="0.5" y="0.5" width="11" height="11" fill="#333335" stroke="#6A6C6E"/><path d="M3 6H9M6 3V9" stroke="#8A8C8E"/></svg>
<svg class="a" style="left:600px;top:234px" width="12" height="13" viewBox="0 0 12 13"><path d="M0.5 0.5H11.5V8L6 12.5L0.5 8Z" fill="#333335" stroke="#6A6C6E"/><path d="M3 5.5H9" stroke="#8A8C8E"/></svg>
<svg class="a" style="left:600px;top:282px" width="12" height="13" viewBox="0 0 12 13"><path d="M0.5 12.5H11.5V5L6 0.5L0.5 5Z" fill="#333335" stroke="#6A6C6E"/><path d="M3 7.5H9" stroke="#8A8C8E"/></svg>
<svg class="a" style="left:600px;top:306px" width="12" height="13" viewBox="0 0 12 13"><path d="M0.5 0.5H11.5V8L6 12.5L0.5 8Z" fill="#333335" stroke="#6A6C6E"/><path d="M3 5.5H9" stroke="#8A8C8E"/></svg>
<svg class="a" style="left:600px;top:330px" width="12" height="13" viewBox="0 0 12 13"><path d="M0.5 12.5H11.5V5L6 0.5L0.5 5Z" fill="#333335" stroke="#6A6C6E"/><path d="M3 7.5H9" stroke="#8A8C8E"/></svg>
<svg class="a" style="left:600px;top:738px" width="12" height="13" viewBox="0 0 12 13"><path d="M0.5 0.5H11.5V8L6 12.5L0.5 8Z" fill="#333335" stroke="#6A6C6E"/><path d="M3 5.5H9" stroke="#8A8C8E"/></svg>
<svg class="a" style="left:600px;top:858px" width="12" height="13" viewBox="0 0 12 13"><path d="M0.5 12.5H11.5V5L6 0.5L0.5 5Z" fill="#333335" stroke="#6A6C6E"/><path d="M3 7.5H9" stroke="#8A8C8E"/></svg>
<svg class="a" style="left:600px;top:906px" width="12" height="13" viewBox="0 0 12 13"><path d="M0.5 0.5H11.5V8L6 12.5L0.5 8Z" fill="#333335" stroke="#6A6C6E"/><path d="M3 5.5H9" stroke="#8A8C8E"/></svg>
<svg class="a" style="left:568px;top:353px" width="18" height="18" viewBox="0 0 18 18"><path d="M3 1.5C7 0 13 2 15 7.5C13 13 9 15 6.5 14.5C3 14 0.5 11 0.5 7C0.5 4.5 1.5 2.5 3 1.5Z" fill="#62B543"/><path d="M2 2L13 13" stroke="#1E3A14" stroke-width="1.2"/><circle cx="12.5" cy="12.5" r="5" fill="#4790B2" stroke="#2b2b2b" stroke-width="0.8"/><path d="M14 11A2 2 0 1 0 14 14" stroke="#1F5A73" stroke-width="1.2" fill="none"/></svg>
<svg class="a" style="left:568px;top:425px" width="18" height="18" viewBox="0 0 18 18"><path d="M3 1.5C7 0 13 2 15 7.5C13 13 9 15 6.5 14.5C3 14 0.5 11 0.5 7C0.5 4.5 1.5 2.5 3 1.5Z" fill="#62B543"/><path d="M2 2L13 13" stroke="#1E3A14" stroke-width="1.2"/><path d="M6 11H11V8.5L16 12.5L11 16.5V14H6Z" fill="#C5CDD3" stroke="#2b2b2b" stroke-width="0.6"/></svg>
<svg class="a" style="left:568px;top:497px" width="18" height="18" viewBox="0 0 18 18"><path d="M3 1.5C7 0 13 2 15 7.5C13 13 9 15 6.5 14.5C3 14 0.5 11 0.5 7C0.5 4.5 1.5 2.5 3 1.5Z" fill="#62B543"/><path d="M2 2L13 13" stroke="#1E3A14" stroke-width="1.2"/><path d="M6 11H11V8.5L16 12.5L11 16.5V14H6Z" fill="#C5CDD3" stroke="#2b2b2b" stroke-width="0.6"/></svg>
<svg class="a" style="left:568px;top:569px" width="18" height="18" viewBox="0 0 18 18"><path d="M3 1.5C7 0 13 2 15 7.5C13 13 9 15 6.5 14.5C3 14 0.5 11 0.5 7C0.5 4.5 1.5 2.5 3 1.5Z" fill="#62B543"/><path d="M2 2L13 13" stroke="#1E3A14" stroke-width="1.2"/><path d="M6 11H11V8.5L16 12.5L11 16.5V14H6Z" fill="#C5CDD3" stroke="#2b2b2b" stroke-width="0.6"/></svg>
<svg class="a" style="left:568px;top:617px" width="18" height="18" viewBox="0 0 18 18"><path d="M3 1.5C7 0 13 2 15 7.5C13 13 9 15 6.5 14.5C3 14 0.5 11 0.5 7C0.5 4.5 1.5 2.5 3 1.5Z" fill="#62B543"/><path d="M2 2L13 13" stroke="#1E3A14" stroke-width="1.2"/><path d="M6 11H11V8.5L16 12.5L11 16.5V14H6Z" fill="#C5CDD3" stroke="#2b2b2b" stroke-width="0.6"/></svg>
<svg class="a" style="left:568px;top:689px" width="18" height="18" viewBox="0 0 18 18"><path d="M3 1.5C7 0 13 2 15 7.5C13 13 9 15 6.5 14.5C3 14 0.5 11 0.5 7C0.5 4.5 1.5 2.5 3 1.5Z" fill="#62B543"/><path d="M2 2L13 13" stroke="#1E3A14" stroke-width="1.2"/><path d="M6 11H11V8.5L16 12.5L11 16.5V14H6Z" fill="#C5CDD3" stroke="#2b2b2b" stroke-width="0.6"/></svg>
<svg class="a" style="left:623px;top:332px" width="10" height="14" viewBox="0 0 10 14"><circle cx="5" cy="5" r="4.5" fill="#F4A622"/><path d="M3 10.5H7M3 12.5H7" stroke="#BBBBBB" stroke-width="1"/></svg>
<div class="a" style="left:660px;top:925px;width:1px;height:72px;background:#393939"></div>
<div class="a" style="left:614px;top:973px;width:989px;height:8px;background:#585858;opacity:0.9"></div>
<div class="a" style="left:524px;top:982px;width:1384px;height:24px;background:#3E3F41;border-top:1px solid #323232"></div>
<div class="t" style="left:616px;top:987px;font-size:13px;color:#BBBBBB">TestController</div>
<div class="a" style="left:0;top:0;width:1301px;height:873px;overflow:hidden;left:607px;top:109px">
<div class="a" style="left:307px;top:868px;width:24px;height:18px;background:#3B3B3B;border-radius:3px"></div>
<div class="a mono" style="left:334px;top:865px;line-height:24px;font-size:18.33px;color:#6A8759">"title"</div>
<div class="a mono" style="left:411px;top:865px;line-height:24px;font-size:18.33px;color:#CC7832">,</div>
<div class="a" style="left:436px;top:868px;width:30px;height:18px;background:#3B3B3B;border-radius:3px"></div>
<div class="a mono" style="left:471px;top:865px;line-height:24px;font-size:18.33px;color:#6A8759">"心理测试列表");</div>
</div>
<div class="a" style="left:614px;top:973px;width:989px;height:8px;background:#585858"></div>
<div class="a" style="left:524px;top:982px;width:1384px;height:24px;background:#3E3F41;border-top:1px solid #323232"></div>
<div class="t" style="left:616px;top:987px;font-size:13px;color:#BBBBBB">TestController</div>
<div class="a" style="left:1908px;top:84px;width:22px;height:922px;background:#3E3F41;border-left:1px solid #323232"></div>
<div class="a" style="left:524px;top:84px;width:1384px;height:25px;background:#3E3F41;border-bottom:1px solid #2B2B2B"></div>
<div class="a" style="left:1719px;top:84px;width:156px;height:25px;background:#515556"></div>
<div class="a" style="left:1719px;top:105px;width:156px;height:3px;background:#40A0C4"></div>
<div class="a" style="left:524px;top:84px;width:36px;height:24px;overflow:hidden;background:#3E3F41"><div class="t" style="right:0;top:4px">er.java</div></div>
<svg class="a" style="left:564px;top:93px" width="8" height="8" viewBox="0 0 8 8"><path d="M0.5 0.5L7.5 7.5M7.5 0.5L0.5 7.5" stroke="#6E7072" stroke-width="1.1"/></svg>
<div class="a" style="left:583px;top:84px;width:1px;height:24px;background:#323232"></div>
<svg class="a" style="left:592px;top:90px" width="14" height="14" viewBox="0 0 14 14"><circle cx="7" cy="7" r="7" fill="#4790B2"/><path d="M8.8 5.1A2.6 2.6 0 1 0 8.8 8.9" stroke="#1D4A5E" stroke-width="1.3" fill="none"/></svg>
<div class="t" style="left:610px;top:89px">QuestionController.java</div>
<svg class="a" style="left:750px;top:93px" width="8" height="8" viewBox="0 0 8 8"><path d="M0.5 0.5L7.5 7.5M7.5 0.5L0.5 7.5" stroke="#6E7072" stroke-width="1.1"/></svg>
<div class="a" style="left:768px;top:84px;width:1px;height:24px;background:#323232"></div>
<svg class="a" style="left:777.6px;top:90px" width="14" height="14" viewBox="0 0 14 14"><circle cx="7" cy="7" r="7" fill="#4790B2"/><path d="M8.8 5.1A2.6 2.6 0 1 0 8.8 8.9" stroke="#1D4A5E" stroke-width="1.3" fill="none"/></svg>
<div class="t" style="left:796.5px;top:89px">RoleController.java</div>
<svg class="a" style="left:909.6px;top:93px" width="8" height="8" viewBox="0 0 8 8"><path d="M0.5 0.5L7.5 7.5M7.5 0.5L0.5 7.5" stroke="#6E7072" stroke-width="1.1"/></svg>
<div class="a" style="left:928px;top:84px;width:1px;height:24px;background:#323232"></div>
<svg class="a" style="left:937.5px;top:90px" width="14" height="14" viewBox="0 0 14 14"><circle cx="7" cy="7" r="7" fill="#4790B2"/><path d="M8.8 5.1A2.6 2.6 0 1 0 8.8 8.9" stroke="#1D4A5E" stroke-width="1.3" fill="none"/></svg>
<div class="t" style="left:956.4px;top:89px">UserController.java</div>
<svg class="a" style="left:1070.4px;top:93px" width="8" height="8" viewBox="0 0 8 8"><path d="M0.5 0.5L7.5 7.5M7.5 0.5L0.5 7.5" stroke="#6E7072" stroke-width="1.1"/></svg>
<div class="a" style="left:1089px;top:84px;width:1px;height:24px;background:#323232"></div>
<svg class="a" style="left:1098.7px;top:90px" width="14" height="14" viewBox="0 0 14 14"><circle cx="7" cy="7" r="7" fill="#4790B2"/><path d="M8.8 5.1A2.6 2.6 0 1 0 8.8 8.9" stroke="#1D4A5E" stroke-width="1.3" fill="none"/></svg>
<div class="t" style="left:1117.3px;top:89px">ConsultantController.java</div>
<svg class="a" style="left:1269px;top:93px" width="8" height="8" viewBox="0 0 8 8"><path d="M0.5 0.5L7.5 7.5M7.5 0.5L0.5 7.5" stroke="#6E7072" stroke-width="1.1"/></svg>
<div class="a" style="left:1285px;top:84px;width:1px;height:24px;background:#323232"></div>
<svg class="a" style="left:1293.5px;top:90px" width="14" height="14" viewBox="0 0 14 14"><circle cx="7" cy="7" r="7" fill="#4790B2"/><path d="M8.8 5.1A2.6 2.6 0 1 0 8.8 8.9" stroke="#1D4A5E" stroke-width="1.3" fill="none"/></svg>
<div class="t" style="left:1312.6px;top:89px">HomeAboutController.java</div>
<svg class="a" style="left:1473.5px;top:93px" width="8" height="8" viewBox="0 0 8 8"><path d="M0.5 0.5L7.5 7.5M7.5 0.5L0.5 7.5" stroke="#6E7072" stroke-width="1.1"/></svg>
<div class="a" style="left:1489.6px;top:84px;width:1px;height:24px;background:#323232"></div>
<svg class="a" style="left:1497px;top:90px" width="14" height="14" viewBox="0 0 14 14"><circle cx="7" cy="7" r="7" fill="#4790B2"/><path d="M8.8 5.1A2.6 2.6 0 1 0 8.8 8.9" stroke="#1D4A5E" stroke-width="1.3" fill="none"/></svg>
<div class="t" style="left:1516px;top:89px">HomeCorrectionController.java</div>
<svg class="a" style="left:1703px;top:93px" width="8" height="8" viewBox="0 0 8 8"><path d="M0.5 0.5L7.5 7.5M7.5 0.5L0.5 7.5" stroke="#6E7072" stroke-width="1.1"/></svg>
<div class="a" style="left:1719px;top:84px;width:1px;height:24px;background:#323232"></div>
<svg class="a" style="left:1727px;top:90px" width="14" height="14" viewBox="0 0 14 14"><circle cx="7" cy="7" r="7" fill="#4790B2"/><path d="M8.8 5.1A2.6 2.6 0 1 0 8.8 8.9" stroke="#1D4A5E" stroke-width="1.3" fill="none"/></svg>
<div class="t" style="left:1745.5px;top:89px">TestController.java</div>
<svg class="a" style="left:1861px;top:93px" width="8" height="8" viewBox="0 0 8 8"><path d="M0.5 0.5L7.5 7.5M7.5 0.5L0.5 7.5" stroke="#6E7072" stroke-width="1.1"/></svg>
<div class="a" style="left:1875px;top:84px;width:1px;height:24px;background:#323232"></div>
<svg class="a" style="left:1880px;top:91px" width="24" height="12" viewBox="0 0 24 12"><path d="M0.5 5H6L3.25 8Z" fill="#AFB1B3"/><path d="M8 1.5H17M8 4.5H17M8 7.5H17M8 10.5H17" stroke="#AFB1B3" stroke-width="1.3"/></svg>
<div class="t" style="left:1898px;top:90px;font-size:9px;color:#AFB1B3">3</div>
<div class="a" style="left:32px;top:84px;width:492px;height:25px;background:#3E3F41;border-bottom:1px solid #2B2B2B"></div>
<svg class="a" style="left:42px;top:90px" width="14" height="13" viewBox="0 0 14 13"><rect x="0.5" y="0.5" width="13" height="12" fill="#3B8BB5" stroke="#9DA3A8"/><rect x="0.5" y="0.5" width="13" height="2" fill="#9DA3A8"/></svg>
<div class="t" style="left:61px;top:88px">Project</div>
<svg class="a" style="left:110px;top:95px" width="9" height="5" viewBox="0 0 9 5"><path d="M0 0H9L4.5 5Z" fill="#ABADAF"/></svg>
<svg class="a" style="left:418px;top:89px" width="14" height="14" viewBox="0 0 14 14"><circle cx="7" cy="7" r="6" fill="none" stroke="#B0B2B4" stroke-width="1.7"/><path d="M7 1.5V5M7 9V12.5M1.5 7H5M9 7H12.5" stroke="#B0B2B4" stroke-width="1.7"/></svg>
<svg class="a" style="left:445px;top:89px" width="13" height="14" viewBox="0 0 13 14"><path d="M2.5 1H9.5L6 4Z" fill="#B0B2B4"/><path d="M0 6.9H12" stroke="#B0B2B4" stroke-width="1.8"/><path d="M2.5 13H9.5L6 10Z" fill="#B0B2B4"/></svg>
<div class="a" style="left:467px;top:88px;width:1px;height:16px;background:#515658"></div>
<svg class="a" style="left:477px;top:89px" width="14" height="14" viewBox="0 0 14 14"><circle cx="7" cy="7" r="4.5" fill="none" stroke="#B0B2B4" stroke-width="3"/><path d="M7 0V3M7 11V14M0 7H3M11 7H14M2 2L4 4M10 10L12 12M12 2L10 4M4 10L2 12" stroke="#B0B2B4" stroke-width="2"/><circle cx="7" cy="7" r="1.5" fill="#3E3F41"/></svg>
<div class="a" style="left:504px;top:95px;width:12px;height:2px;background:#B0B2B4"></div>
<div class="t" style="left:-38.5px;top:110.0px;width:120px;text-align:center;font-size:12px;transform:rotate(-90deg)"><u>1</u>: Project</div>
<svg class="a" style="left:16px;top:148px" width="11" height="10" viewBox="0 0 11 10"><path d="M0 0H4L5 2H11V10H0Z" fill="#B8BABC"/></svg>
<div class="t" style="left:-38.5px;top:780.5px;width:120px;text-align:center;font-size:11.5px;transform:rotate(-90deg)"><u>7</u>: Structure</div>
<svg class="a" style="left:17px;top:824px" width="9" height="11" viewBox="0 0 9 11"><rect x="0" y="6" width="4" height="4" fill="#9A9C9E"/><rect x="5" y="6" width="4" height="4" fill="#9A9C9E"/><rect x="5" y="1" width="4" height="4" fill="#9A9C9E"/></svg>
<div class="t" style="left:-38.5px;top:880.0px;width:120px;text-align:center;font-size:11.5px;transform:rotate(-90deg)"><u>2</u>: Favorites</div>
<svg class="a" style="left:15px;top:924px" width="13" height="12" viewBox="0 0 13 12"><path d="M6.5 0L8.3 4.2L13 4.6L9.4 7.6L10.5 12L6.5 9.6L2.5 12L3.6 7.6L0 4.6L4.7 4.2Z" fill="#9A9C9E"/></svg>
<div class="t" style="left:-38.5px;top:959.5px;width:120px;text-align:center;font-size:11.5px;transform:rotate(-90deg)">Web</div>
<svg class="a" style="left:15px;top:984px" width="13" height="13" viewBox="0 0 13 13"><circle cx="6.5" cy="6.5" r="6" fill="#9A9C9E"/><path d="M3 3C5 4 4 6 6 7C7 8 5 10 6 12M9 1C8 3 10 4 11 5" stroke="#3E3F41" stroke-width="1.3" fill="none"/></svg>
<svg class="a" style="left:1912px;top:94px" width="14" height="13" viewBox="0 0 14 13"><ellipse cx="7" cy="8" rx="3" ry="4" fill="#B0B2B4"/><circle cx="7" cy="3" r="2" fill="#B0B2B4"/><path d="M1 4L4 6M13 4L10 6M0 9H4M14 9H10M1 13L4 11M13 13L10 11" stroke="#B0B2B4" stroke-width="1.2"/></svg>
<div class="t" style="left:1858px;top:127.5px;width:120px;text-align:center;font-size:12px;transform:rotate(90deg)">Ant Build</div>
<div class="t" style="left:1912px;top:180px;font-size:13px;font-weight:bold;font-style:italic;color:#B0B2B4">m</div>
<div class="t" style="left:1858px;top:208.0px;width:120px;text-align:center;font-size:12px;transform:rotate(90deg)">Maven</div>
<svg class="a" style="left:1913px;top:254px" width="11" height="12" viewBox="0 0 11 12"><ellipse cx="5.5" cy="2.5" rx="5" ry="2" fill="#B0B2B4"/><path d="M0.5 4.5C0.5 7 10.5 7 10.5 4.5M0.5 7.5C0.5 10 10.5 10 10.5 7.5M0.5 10C0.5 12.5 10.5 12.5 10.5 10" stroke="#B0B2B4" stroke-width="1.5" fill="none"/></svg>
<div class="t" style="left:1858px;top:288.0px;width:120px;text-align:center;font-size:12px;transform:rotate(90deg)">Database</div>
<svg class="a" style="left:1913px;top:343px" width="12" height="12" viewBox="0 0 12 12"><circle cx="6" cy="6" r="5.5" fill="#B0B2B4"/><path d="M3 6L5.5 8.5L10 2" stroke="#3E3F41" stroke-width="1.6" fill="none"/></svg>
<div class="t" style="left:1858px;top:392.0px;width:120px;text-align:center;font-size:12px;transform:rotate(90deg)">Bean Validation</div>
<div class="a" style="left:1896px;top:111px;width:10px;height:10px;background:#D9A422"></div>
<div class="a" style="left:1899px;top:126px;width:8px;height:93px;background:#848484"></div>
<div class="a" style="left:1894px;top:132px;width:5px;height:2px;background:#C9A020"></div>
<div class="a" style="left:1894px;top:157px;width:5px;height:2px;background:#C9A020"></div>
<div class="a" style="left:1894px;top:166px;width:5px;height:4px;background:#C9A020"></div>
<div class="a" style="left:1894px;top:173px;width:5px;height:2px;background:#C9A020"></div>
<div class="a" style="left:1894px;top:178px;width:5px;height:2px;background:#C9A020"></div>
<div class="a" style="left:1894px;top:186px;width:5px;height:2px;background:#C9A020"></div>
<div class="a" style="left:1894px;top:203px;width:5px;height:4px;background:#C9A020"></div>
<div class="a" style="left:1895px;top:152px;width:3px;height:3px;background:#2E7D32"></div>
<div class="a" style="left:1894px;top:250px;width:14px;height:2px;background:#C9A020"></div>
<div class="a" style="left:1894px;top:253px;width:14px;height:2px;background:#C9A020"></div>
<div class="a" style="left:1894px;top:306px;width:14px;height:2px;background:#C9A020"></div>
<div class="a" style="left:1894px;top:397px;width:14px;height:2px;background:#C9A020"></div>
<div class="a" style="left:1894px;top:405px;width:14px;height:2px;background:#C9A020"></div>
<div class="a" style="left:1894px;top:408px;width:14px;height:2px;background:#C9A020"></div>
<div class="a" style="left:1894px;top:413px;width:14px;height:2px;background:#C9A020"></div>
<div class="a" style="left:1894px;top:453px;width:14px;height:4px;background:#C9A020"></div>
<div class="a" style="left:1894px;top:505px;width:14px;height:2px;background:#C9A020"></div>
<div class="a" style="left:1894px;top:730px;width:14px;height:3px;background:#C9A020"></div>
<div class="a" style="left:1894px;top:802px;width:14px;height:3px;background:#C9A020"></div>
<div class="a" style="left:1894px;top:807px;width:14px;height:2px;background:#C9A020"></div>
<div class="a" style="left:1894px;top:887px;width:14px;height:2px;background:#C9A020"></div>
<div class="a" style="left:1894px;top:683px;width:14px;height:16px;background:#7A7766"></div>
<div class="a" style="left:1894px;top:712px;width:14px;height:16px;background:#7A7766"></div>
<div class="a" style="left:1894px;top:866px;width:14px;height:19px;background:#7A7766"></div>
<svg class="a" style="left:1633px;top:63px" width="14" height="12" viewBox="0 0 14 12"><rect x="0.5" y="0.5" width="13" height="11" fill="none" stroke="#B0B2B4"/><path d="M0.5 2.5H13.5" stroke="#B0B2B4"/><path d="M4 5L8 7.5L4 10Z" fill="#59A869"/></svg>
<svg class="a" style="left:1658px;top:62px" width="16" height="15" viewBox="0 0 16 15"><path d="M1 5L6 0.5L9 3.5L4 8Z" fill="#59A869"/><path d="M6 5L14 13.5" stroke="#59A869" stroke-width="2.6"/></svg>
<div class="a" style="left:1685px;top:58px;width:75px;height:22px;border:1px solid #5E6060;border-radius:3px"></div>
<svg class="a" style="left:1692px;top:62px" width="16" height="16" viewBox="0 0 16 16"><path d="M1.5 14C-0.5 8 4 1.5 14.5 0.5C15 9 10 14.5 1.5 14Z" fill="#6DB33F"/><path d="M2 13C5 9 8 6 12 3" stroke="#3E3F41" stroke-width="0.8" fill="none"/><circle cx="10" cy="11" r="4.5" fill="#B8BABC" stroke="#3E3F41"/><path d="M10 9V11.5M8.3 10A2.3 2.3 0 1 0 11.7 10" stroke="#3E3F41" stroke-width="1" fill="none"/></svg>
<div class="t" style="left:1712px;top:61px;font-size:13px">App</div>
<svg class="a" style="left:1744px;top:66px" width="9" height="5" viewBox="0 0 9 5"><path d="M0 0H9L4.5 5Z" fill="#B0B2B4"/></svg>
<svg class="a" style="left:1774px;top:64px" width="11" height="13" viewBox="0 0 11 13"><path d="M0 0L11 6.5L0 13Z" fill="#59A869"/></svg>
<svg class="a" style="left:1798px;top:62px" width="13" height="15" viewBox="0 0 13 15"><ellipse cx="6.5" cy="8.5" rx="4.5" ry="5.5" fill="#59A869"/><path d="M0 4L3 6M13 4L10 6M0 9H3M13 9H10M1 14L3 12M12 14L10 12M4 1L5 3M9 1L8 3" stroke="#59A869" stroke-width="1.4"/><path d="M3.5 7H9.5M3.5 10H9.5" stroke="#3E3F41" stroke-width="1.2"/></svg>
<svg class="a" style="left:1822px;top:62px" width="17" height="16" viewBox="0 0 17 16"><path d="M1 1.5L5.5 0L10 1.5V7C10 10 5.5 12.5 5.5 12.5C5.5 12.5 1 10 1 7Z" fill="#B8BABC"/><path d="M5.5 1V12" stroke="#3E3F41" stroke-width="0.8"/><path d="M8 7L16 11.5L8 16Z" fill="#59A869"/></svg>
<div class="a" style="left:1851px;top:64px;width:10px;height:10px;background:#5A5C5E"></div>
<div class="a" style="left:1872px;top:60px;width:1px;height:18px;background:#515658"></div>
<svg class="a" style="left:1882px;top:63px" width="14" height="14" viewBox="0 0 14 14"><circle cx="5.5" cy="5.5" r="4.5" fill="none" stroke="#B0B2B4" stroke-width="1.8"/><path d="M9 9L13.5 13.5" stroke="#B0B2B4" stroke-width="2"/></svg>
<svg class="a" style="left:1907px;top:63px" width="16" height="14" viewBox="0 0 16 14"><path d="M0 0H5L6 2H12V10H0Z" fill="#9BA5AD"/><rect x="8" y="7" width="3" height="3" fill="#3B8BB5"/><rect x="12" y="7" width="3" height="3" fill="#3B8BB5"/><rect x="8" y="11" width="3" height="3" fill="#3B8BB5"/><rect x="12" y="11" width="3" height="3" fill="#3B8BB5"/></svg>
<div class="a" style="left:10px;top:1006px;width:1920px;height:23px;background:#3E3F41;border-top:1px solid #2B2B2B"></div>
<svg class="a" style="left:44px;top:1014px" width="11" height="10" viewBox="0 0 11 10"><path d="M0 1H2M0 5H2M0 9H2M3.5 1H11M3.5 5H11M3.5 9H11" stroke="#AFB1B3" stroke-width="1.8"/></svg>
<div class="t" style="left:59px;top:1011px;font-size:11.5px"><u>6</u>: TODO</div>
<svg class="a" style="left:124px;top:1012px" width="13" height="12" viewBox="0 0 13 12"><path d="M0.5 11C0 5 5 0.5 12.5 0.5C12.5 7 8 11 0.5 11Z" fill="#A8AAAC"/><path d="M1 11C4 7 7 5 10 3" stroke="#3E3F41" stroke-width="0.8" fill="none"/></svg>
<div class="t" style="left:141.6px;top:1011px;font-size:11.5px">Spring</div>
<svg class="a" style="left:196px;top:1012px" width="11" height="11" viewBox="0 0 11 11"><rect x="0" y="0" width="11" height="11" fill="#A8AAAC"/><path d="M2 2.5L5 5L2 7.5M5.5 8.5H9" stroke="#3E3F41" stroke-width="1.1" fill="none"/></svg>
<div class="t" style="left:212px;top:1011px;font-size:11.5px">Terminal</div>
<svg class="a" style="left:279px;top:1012px" width="14" height="13" viewBox="0 0 14 13"><rect x="0.5" y="0.5" width="10" height="9" fill="none" stroke="#A8AAAC"/><rect x="0.5" y="0.5" width="10" height="2" fill="#A8AAAC"/><rect x="5" y="5" width="8.5" height="8" fill="#3E3F41" stroke="#A8AAAC"/><path d="M7 8H12M7 10.5H12" stroke="#A8AAAC" stroke-width="0.9"/></svg>
<div class="t" style="left:295px;top:1011px;font-size:11.5px">Java Enterprise</div>
<div class="a" style="left:10px;top:1029px;width:1920px;height:21px;background:#3E3F41;border-top:1px solid #323232"></div>
<svg class="a" style="left:20px;top:1034px" width="12" height="12" viewBox="0 0 12 12"><rect x="0.5" y="3.5" width="8" height="8" fill="none" stroke="#A8AAAC"/><path d="M3 3.5V0.5H11.5V9H8.5" fill="none" stroke="#A8AAAC"/></svg>
<div class="t" style="left:1666px;top:1032px;font-size:12px">29:14</div>
<div class="t" style="left:1708px;top:1032px;font-size:12px">CRLF</div>
<svg class="a" style="left:1741.5px;top:1034px" width="6" height="11" viewBox="0 0 6 11"><path d="M0 4.5L3 0.5L6 4.5ZM0 6.5L3 10.5L6 6.5Z" fill="#9A9C9E"/></svg>
<div class="t" style="left:1757.5px;top:1032px;font-size:12px">UTF-8</div>
<svg class="a" style="left:1797px;top:1034px" width="6" height="11" viewBox="0 0 6 11"><path d="M0 4.5L3 0.5L6 4.5ZM0 6.5L3 10.5L6 6.5Z" fill="#9A9C9E"/></svg>
<div class="t" style="left:1812.5px;top:1032px;font-size:12px">4 spaces</div>
<svg class="a" style="left:1868px;top:1034px" width="6" height="11" viewBox="0 0 6 11"><path d="M0 4.5L3 0.5L6 4.5ZM0 6.5L3 10.5L6 6.5Z" fill="#9A9C9E"/></svg>
<svg class="a" style="left:1885px;top:1033px" width="11" height="12" viewBox="0 0 11 12"><rect x="3" y="5.5" width="8" height="6.5" fill="#A8AAAC"/><path d="M1 6V3A2.5 2.5 0 0 1 6 3" stroke="#A8AAAC" stroke-width="1.3" fill="none"/></svg>
<svg class="a" style="left:1910px;top:1032px" width="13" height="14" viewBox="0 0 13 14"><circle cx="6.5" cy="5" r="4" fill="none" stroke="#8A8C8E" stroke-width="1.2"/><path d="M1 13C1 9 12 9 12 13Z" fill="none" stroke="#8A8C8E" stroke-width="1.2"/><path d="M3 5H10" stroke="#8A8C8E"/></svg>
<svg class="a" style="left:1765px;top:865px" width="146" height="143" viewBox="0 0 146 143"><circle cx="73" cy="71" r="71" fill="none" stroke="#B8262C" stroke-width="2.5" opacity="0.75"/><circle cx="73" cy="71" r="65.5" fill="none" stroke="#C81E26" stroke-width="3.5"/><g transform="translate(86 35)"><circle cx="0" cy="0" r="7" fill="none" stroke="#D0232B" stroke-width="3"/><circle cx="0" cy="0" r="3" fill="#D0232B"/><path d="M0 -7L1 -11" stroke="#D0232B" stroke-width="2"/></g><text x="0" y="0" transform="translate(42 39) rotate(19)" font-family="Liberation Sans" font-size="10" font-weight="bold" fill="#D0303A">www.yuanlrc.com</text><text x="0" y="0" transform="translate(16 66) rotate(18)" font-size="26" font-weight="bold" fill="#C8242A" letter-spacing="3">猿来入此</text><text x="0" y="0" transform="translate(40 115) rotate(8)" font-size="23" font-weight="bold" fill="#C8242A">出品</text></svg>
<div class="a" style="left:1763px;top:1009px;font-size:20.5px;line-height:26px;color:#C8262C;opacity:0.9">【猿来技术资源】</div>
<div class="a" style="left:1585px;top:1003px;font-size:25px;line-height:30px;color:#DCDCDC;text-shadow:2px 2px 1px #151515,0 0 3px #000">掘金技术社区 @ 115432031q</div>
</body></html>
